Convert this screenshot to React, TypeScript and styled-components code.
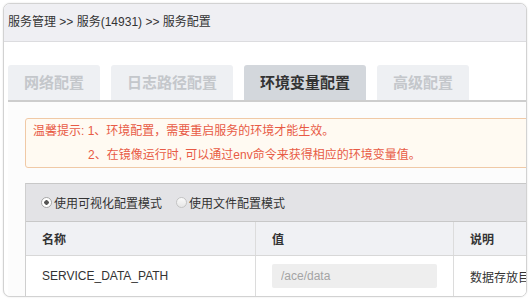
import React from "react";
import styled, { createGlobalStyle } from "styled-components";

const GlobalStyle = createGlobalStyle`
  html, body {
    margin: 0;
    padding: 0;
    background: #ffffff;
  }
  body {
    font-family: "Liberation Sans", "Noto Sans CJK SC", sans-serif;
    font-size: 12px;
    color: #333;
  }
`;

const tabs = ["网络配置", "日志路径配置", "环境变量配置", "高级配置"];

const rows = [
  { name: "SERVICE_DATA_PATH", value: "/ace/data", desc: "数据存放目录" },
];

function App() {
  return (
    <>
      <GlobalStyle />
      <Panel>
        <Header>服务管理 &gt;&gt; 服务(14931) &gt;&gt; 服务配置</Header>
        <Body>
          <TabBar>
            {tabs.map((t, i) => (
              <Tab key={t} $active={i === 2}>
                {t}
              </Tab>
            ))}
          </TabBar>
          <TabContent>
            <Notice>
              <NoticeLine>温馨提示: 1、环境配置，需要重启服务的环境才能生效。</NoticeLine>
              <NoticeLine $indent>2、在镜像运行时, 可以通过env命令来获得相应的环境变量值。</NoticeLine>
            </Notice>
            <Table>
              <ModeBar>
                <ModeOption>
                  <Radio $checked />
                  使用可视化配置模式
                </ModeOption>
                <ModeOption>
                  <Radio />
                  使用文件配置模式
                </ModeOption>
              </ModeBar>
              <HeadRow>
                <Cell>名称</Cell>
                <Cell>值</Cell>
                <Cell>说明</Cell>
              </HeadRow>
              {rows.map((r) => (
                <DataRow key={r.name}>
                  <Cell>{r.name}</Cell>
                  <Cell>
                    <ValueInput placeholder={r.value} readOnly />
                  </Cell>
                  <Cell>{r.desc}</Cell>
                </DataRow>
              ))}
            </Table>
          </TabContent>
        </Body>
      </Panel>
    </>
  );
}

const Panel = styled.div`
  margin: 3px;
  height: 292px;
  border: 1px solid #d2d2d2;
  border-radius: 7px;
  box-shadow: 0 0 2px rgba(0, 0, 0, 0.12);
  overflow: hidden;
  background: #fff;
`;

const Header = styled.div`
  height: 37px;
  line-height: 36px;
  padding-left: 4px;
  background: #efeff3;
  border-bottom: 1px solid #dcdcdf;
  color: #333;
  font-size: 12px;
`;

const Body = styled.div`
  padding: 23px 0 0 4px;
`;

const TabBar = styled.div`
  display: flex;
  gap: 11px;
  border-bottom: 2px solid #cdcdcd;
`;

const Tab = styled.div<{ $active?: boolean }>`
  height: 35px;
  line-height: 35px;
  padding: 0 16px;
  border-radius: 3px 3px 0 0;
  font-size: 15px;
  font-weight: bold;
  background: ${(p) => (p.$active ? "#d3d7dc" : "#eef0f3")};
  color: ${(p) => (p.$active ? "#333" : "#c4c7cb")};
`;

const TabContent = styled.div`
  padding: 16px 0 0 17px;
  background: #fcfcfc;
`;

const Notice = styled.div`
  width: 560px;
  border: 1px solid #f0c9a6;
  border-radius: 3px;
  background: #fffaf2;
  color: #e85a45;
  font-size: 12px;
  padding-left: 7px;
`;

const NoticeLine = styled.div<{ $indent?: boolean }>`
  line-height: 24px;
  white-space: nowrap;
  padding-left: ${(p) => (p.$indent ? "55px" : "0")};
`;

const Table = styled.div`
  margin-top: 15px;
  width: 560px;
  border-left: 1px solid #cfcfcf;
  border-top: 1px solid #c8c8c8;
`;

const ModeBar = styled.div`
  display: flex;
  align-items: center;
  gap: 14px;
  height: 37px;
  padding-left: 15px;
  background: #e3e3e6;
  border-bottom: 1px solid #c8c8c8;
`;

const ModeOption = styled.label`
  display: flex;
  align-items: center;
  gap: 2px;
  font-size: 12px;
  color: #333;
`;

const Radio = styled.span<{ $checked?: boolean }>`
  width: 9px;
  height: 9px;
  border-radius: 50%;
  border: 1px solid ${(p) => (p.$checked ? "#a8a8a8" : "#c4c4c4")};
  background: ${(p) =>
    p.$checked
      ? "radial-gradient(circle, #555 0 2px, #fff 2.5px)"
      : "linear-gradient(#fafafa, #e6e6e6)"};
`;

const Row = styled.div`
  display: grid;
  grid-template-columns: 230px 198px 1fr;
  border-bottom: 1px solid #d8d8d8;
`;

const HeadRow = styled(Row)`
  height: 33px;
  align-items: center;
  background: #f0f1f4;
  font-weight: bold;
  color: #333;
`;

const DataRow = styled(Row)`
  height: 40px;
  align-items: center;
  background: #fff;
`;

const Cell = styled.div`
  height: 100%;
  display: flex;
  align-items: center;
  padding-left: 16px;
  border-right: 1px solid #dcdcdc;
  white-space: nowrap;
  overflow: hidden;
`;

const ValueInput = styled.input`
  width: 165px;
  height: 24px;
  box-sizing: border-box;
  border: none;
  border-radius: 2px;
  background: #eeeeee;
  padding-left: 9px;
  font-family: "Liberation Sans", "Noto Sans CJK SC", sans-serif;
  font-size: 12px;
  outline: none;
  &::placeholder {
    color: #a4a4a4;
  }
`;

export default App;
